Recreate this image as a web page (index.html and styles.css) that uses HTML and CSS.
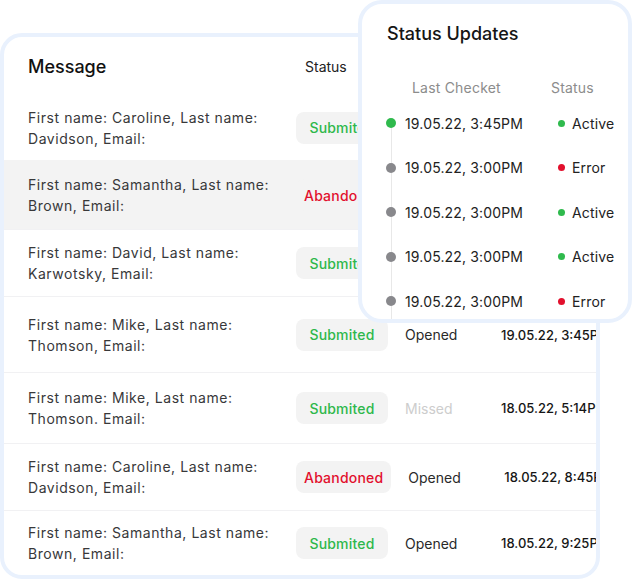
FILE: index.html
```html
<!DOCTYPE html>
<html lang="en">
<head>
<meta charset="utf-8">
<title>Messages</title>
<link rel="stylesheet" href="styles.css">
</head>
<body>
<div class="stage">
  <section class="card">
    <div class="card-head">
      <h2 class="title">Message</h2>
      <span class="head-status">Status</span>
    </div>
    <div class="rows">
      <div class="row">
        <p class="msg">First name: Caroline, Last name: Davidson, Email:</p>
        <span class="pill ok">Submited</span>
        <span class="state">Opened</span>
        <span class="date">19.05.22, 3:45PM</span>
      </div>
      <div class="row hl">
        <p class="msg">First name: Samantha, Last name: Brown, Email:</p>
        <span class="pill bad">Abandoned</span>
        <span class="state">Opened</span>
        <span class="date">19.05.22, 3:00PM</span>
      </div>
      <div class="row">
        <p class="msg">First name: David, Last name: Karwotsky, Email:</p>
        <span class="pill ok">Submited</span>
        <span class="state">Opened</span>
        <span class="date">19.05.22, 3:00PM</span>
      </div>
      <div class="row">
        <p class="msg">First name: Mike, Last name: Thomson, Email:</p>
        <span class="pill ok">Submited</span>
        <span class="state">Opened</span>
        <span class="date">19.05.22, 3:45PM</span>
      </div>
      <div class="row">
        <p class="msg">First name: Mike, Last name: Thomson. Email:</p>
        <span class="pill ok">Submited</span>
        <span class="state missed">Missed</span>
        <span class="date">18.05.22, 5:14PM</span>
      </div>
      <div class="row">
        <p class="msg">First name: Caroline, Last name: Davidson, Email:</p>
        <span class="pill bad">Abandoned</span>
        <span class="state">Opened</span>
        <span class="date">18.05.22, 8:45PM</span>
      </div>
      <div class="row">
        <p class="msg">First name: Samantha, Last name: Brown, Email:</p>
        <span class="pill ok">Submited</span>
        <span class="state">Opened</span>
        <span class="date">18.05.22, 9:25PM</span>
      </div>
    </div>
  </section>

  <aside class="popup">
    <h3 class="pop-title">Status Updates</h3>
    <div class="pop-head">
      <span class="col-a">Last Checket</span>
      <span>Status</span>
    </div>
    <div class="timeline">
      <div class="t-row">
        <span class="tdot green"></span>
        <span class="tdate">19.05.22, 3:45PM</span>
        <span class="sdot green"></span><span class="stxt">Active</span>
      </div>
      <div class="t-row">
        <span class="tdot"></span>
        <span class="tdate">19.05.22, 3:00PM</span>
        <span class="sdot red"></span><span class="stxt">Error</span>
      </div>
      <div class="t-row">
        <span class="tdot"></span>
        <span class="tdate">19.05.22, 3:00PM</span>
        <span class="sdot green"></span><span class="stxt">Active</span>
      </div>
      <div class="t-row">
        <span class="tdot"></span>
        <span class="tdate">19.05.22, 3:00PM</span>
        <span class="sdot green"></span><span class="stxt">Active</span>
      </div>
      <div class="t-row">
        <span class="tdot"></span>
        <span class="tdate">19.05.22, 3:00PM</span>
        <span class="sdot red"></span><span class="stxt">Error</span>
      </div>
    </div>
  </aside>
</div>
</body>
</html>
```

FILE: styles.css
```css
* { box-sizing: border-box; }

html, body {
  margin: 0;
  padding: 0;
  background: #ffffff;
  font-family: Inter, "Noto Sans", "Liberation Sans", sans-serif;
  color: #222222;
}

.stage {
  position: relative;
  width: 632px;
  height: 579px;
  padding-top: 33px;
  overflow: hidden;
}

.card {
  width: 600px;
  height: 546px;
  border: 4px solid #e9f1fd;
  border-radius: 22px;
  background: #ffffff;
  overflow: hidden;
}

.card-head {
  display: flex;
  align-items: center;
  height: 58px;
  padding-left: 24px;
  padding-top: 1px;
}

.title {
  margin: 0;
  width: 277px;
  flex: none;
  font-size: 18px;
  line-height: 22px;
  font-weight: 500;
  color: #111111;
}

.head-status {
  font-size: 14px;
  line-height: 20px;
  color: #222222;
}

.rows {
  display: grid;
  grid-template-rows: 65px 69px 67px 76px 71px 67px 65px;
}

.row {
  display: flex;
  align-items: center;
  padding-left: 24px;
  white-space: nowrap;
}

.row + .row {
  border-top: 1px solid #f1f1f3;
}

.row.hl {
  background: #f3f3f3;
  border-top-color: #f3f3f3;
}

.msg {
  flex: 0 0 268px;
  margin: 0;
  padding-right: 18px;
  white-space: normal;
  font-size: 14px;
  line-height: 21px;
  color: #38383a;
  letter-spacing: 0.55px;
}

.pill {
  flex: none;
  display: flex;
  align-items: center;
  justify-content: center;
  min-width: 92px;
  height: 32px;
  padding: 0 8px;
  border-radius: 8px;
  background: #f3f3f3;
  font-size: 14px;
  font-weight: 500;
  letter-spacing: 0.2px;
}

.pill.ok { color: #2eb84b; }
.pill.bad { color: #e2102d; }

.state {
  flex: 0 0 113px;
  padding-left: 17px;
  font-size: 14px;
  color: #2a2a2a;
}

.state.missed { color: #cdcdcd; }

.date {
  flex: none;
  font-size: 13px;
  font-weight: 500;
  color: #161616;
}

/* popup */
.popup {
  position: absolute;
  top: 0;
  left: 358px;
  width: 274px;
  height: 323px;
  border: 4px solid #e9f1fd;
  border-radius: 24px;
  background: #ffffff;
  padding: 19px 0 0 24px;
  overflow: hidden;
}

.pop-title {
  margin: 0 0 0 1px;
  font-size: 18px;
  line-height: 22px;
  font-weight: 500;
  color: #151515;
}

.pop-head {
  display: flex;
  margin-top: 33px;
  padding-left: 26px;
  font-size: 14px;
  line-height: 20px;
  color: #8c8c8c;
  letter-spacing: 0.2px;
}

.col-a {
  width: 139px;
  flex: none;
}

.timeline {
  position: relative;
  margin-top: 3px;
}

.timeline::before {
  content: "";
  position: absolute;
  left: 4.5px;
  top: 22px;
  bottom: 0;
  width: 1px;
  background: #e8e8e8;
}

.t-row {
  display: flex;
  align-items: center;
  height: 44.5px;
  font-size: 14px;
  color: #222222;
  letter-spacing: 0.15px;
}

.tdot {
  position: relative;
  z-index: 1;
  flex: none;
  width: 10px;
  height: 10px;
  border-radius: 50%;
  background: #88888c;
  margin-right: 9px;
}

.tdot.green { background: #2fba4d; }

.tdate {
  flex: 0 0 153px;
}

.sdot {
  flex: none;
  width: 7px;
  height: 7px;
  border-radius: 50%;
  margin-right: 7px;
}

.sdot.green { background: #2fba4d; }
.sdot.red { background: #e2102d; }
```
